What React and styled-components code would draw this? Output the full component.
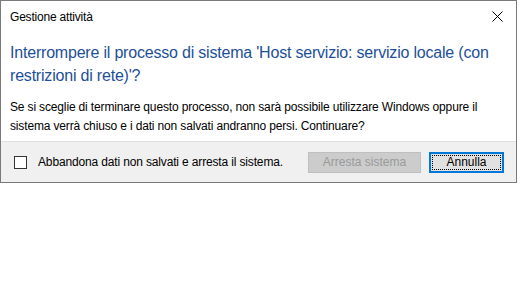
import React from 'react';
import styled, { createGlobalStyle } from 'styled-components';

const Global = createGlobalStyle`
  html, body {
    margin: 0;
    padding: 0;
    background: #ffffff;
  }
  body {
    font-family: "Segoe UI", "Liberation Sans", Arial, sans-serif;
  }
`;

const Dialog = styled.div`
  width: 517px;
  box-sizing: border-box;
  border: 1px solid #7a7a7a;
  background: #ffffff;
  display: flex;
  flex-direction: column;
`;

const TitleBar = styled.div`
  height: 31px;
  display: flex;
  align-items: center;
  justify-content: space-between;
  padding: 0 13px 0 9px;
`;

const TitleText = styled.span`
  font-size: 12px;
  letter-spacing: -0.2px;
  color: #000000;
`;

const CloseButton = styled.div`
  width: 12px;
  height: 12px;
  display: flex;
  align-items: center;
  justify-content: center;
`;

const Content = styled.div`
  padding: 9px 9px 5px 9px;
  display: flex;
  flex-direction: column;
  gap: 11px;
`;

const Heading = styled.div`
  font-size: 16px;
  line-height: 23px;
  letter-spacing: -0.2px;
  color: #1d4f98;
  white-space: nowrap;
`;

const Body = styled.div`
  font-size: 12px;
  line-height: 19px;
  letter-spacing: -0.15px;
  color: #000000;
  white-space: nowrap;
`;

const Footer = styled.div`
  background: #f0f0f0;
  border-top: 1px solid #dfdfdf;
  height: 40px;
  display: flex;
  align-items: center;
  padding: 0 12px 0 13px;
`;

const CheckLabel = styled.label`
  display: flex;
  align-items: center;
  gap: 11px;
  font-size: 12px;
  letter-spacing: -0.15px;
  color: #000000;
  flex: 1;
`;

const Box = styled.span`
  width: 11px;
  height: 11px;
  border: 1px solid #333333;
  background: #ffffff;
`;

const Button = styled.div`
  height: 21px;
  box-sizing: border-box;
  display: flex;
  align-items: center;
  justify-content: center;
  font-size: 12px;
  width: ${p => p.$w}px;
  margin-left: ${p => p.$gap || 0}px;
  background: ${p => (p.$disabled ? '#cccccc' : '#e1e1e1')};
  color: ${p => (p.$disabled ? '#9a9a9a' : '#000000')};
  border: ${p => (p.$primary ? '2px solid #0078d7' : '1px solid #bfbfbf')};
`;

const Focus = styled.span`
  align-self: stretch;
  flex: 1;
  margin: 1px;
  border: 1px dotted #000000;
  display: flex;
  align-items: center;
  justify-content: center;
`;

export default function App() {
  return (
    <>
      <Global />
      <Dialog>
        <TitleBar>
          <TitleText>Gestione attività</TitleText>
          <CloseButton>
            <svg width="11" height="11" viewBox="0 0 11 11">
              <path d="M0.5 0.5 L10.5 10.5 M10.5 0.5 L0.5 10.5" stroke="#000" strokeWidth="1" />
            </svg>
          </CloseButton>
        </TitleBar>
        <Content>
          <Heading>
            Interrompere il processo di sistema 'Host servizio: servizio locale (con
            <br />
            restrizioni di rete)'?
          </Heading>
          <Body>
            Se si sceglie di terminare questo processo, non sarà possibile utilizzare Windows oppure il
            <br />
            sistema verrà chiuso e i dati non salvati andranno persi. Continuare?
          </Body>
        </Content>
        <Footer>
          <CheckLabel>
            <Box />
            Abbandona dati non salvati e arresta il sistema.
          </CheckLabel>
          <Button $w={113} $disabled>Arresta sistema</Button>
          <Button $w={75} $gap={8} $primary>
            <Focus>Annulla</Focus>
          </Button>
        </Footer>
      </Dialog>
    </>
  );
}
